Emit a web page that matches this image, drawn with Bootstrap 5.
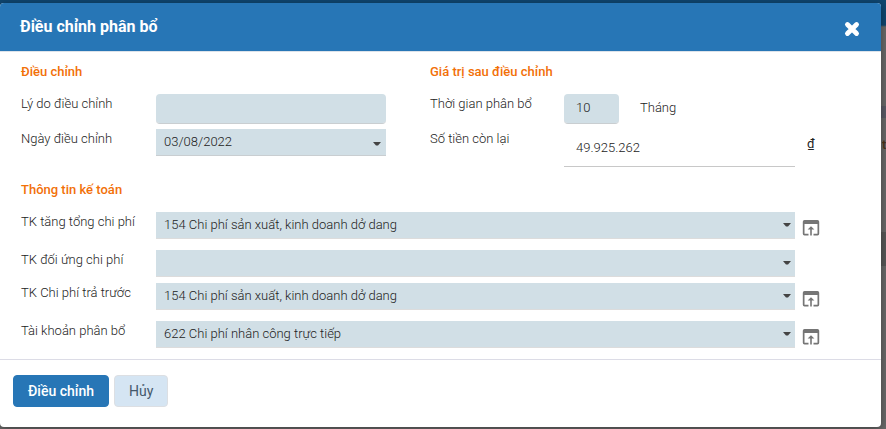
<!DOCTYPE html>
<html lang="vi">
<head>
<meta charset="utf-8">
<meta name="viewport" content="width=device-width, initial-scale=1">
<title>Điều chỉnh phân bổ</title>
<link href="https://cdn.jsdelivr.net/npm/bootstrap@5.3.0/dist/css/bootstrap.min.css" rel="stylesheet">
<style>
  body {
    font-family: Roboto, "Noto Sans", sans-serif;
    font-size: 13px;
    font-weight: 300;
    line-height: 18px;
    color: #222;
    background:
      linear-gradient(#5b5b66, #5b5b66) right 0 top 106px / 40px 12px no-repeat,
      linear-gradient(#585858, #585858) right 0 top 232px / 6px 34px no-repeat,
      linear-gradient(#0f4670 25px, #696969 27px);
    overflow: hidden;
  }
  .behind-text { top: 136px; right: 0; width: 4px; overflow: hidden; color: #4a3418; font-weight: 500; }
  .dialog { margin: 3px 5px 3px 0; background: #fff; border-radius: 4px; box-shadow: 0 2px 8px rgba(0, 0, 0, .4); position: relative; }
  .dialog-head { background: #2776b6; border-bottom: 1px solid #dde3ea; border-radius: 4px 4px 0 0; height: 49px; padding: 0 21px 1px 20px; }
  .dialog-head h1 { font-size: 16px; line-height: 24px; font-weight: 700; color: #fff; }
  .dialog-body { padding: 11px 60px 10px 21px; }
  .dialog-foot { border-top: 1px solid #dcdce6; padding: 15px 13px 20px; gap: 5px; }
  .section-title { font-size: 13px; line-height: 18px; font-weight: 500; color: #f27008; margin-bottom: 13px; }
  .two-cols { display: grid; grid-template-columns: 365fr 391fr; column-gap: 44px; margin-bottom: 14px; }
  .form-line { margin-bottom: 10px; }
  .form-line.tight { margin-bottom: 5px; }
  .form-line:last-child { margin-bottom: 0; }
  .account-lines .form-line { height: 28px; }
  .field-label { flex: 0 0 135px; padding-top: 1px; }
  .field-label.narrow { flex-basis: 134px; }
  .suffix { flex: 0 0 26px; padding: 6px 0 0 12px; font-weight: 400; }
  .suffix.open { padding: 6px 0 0 7px; }
  .suffix button { color: #757575; line-height: 0; }
  .field, .field:focus {
    min-width: 0; height: 28px; padding: 0 12px 0 8px; border: 0; border-bottom: 1px solid #c9ced1; border-radius: 0;
    background-color: #d1dfe6; color: #222; font-size: 13px; font-weight: 300; line-height: 18px;
  }
  select.field, select.field:focus {
    height: 27px; padding-right: 24px; border-bottom-color: #dcdcdc;
    background-image: url("data:image/svg+xml,%3Csvg xmlns='http://www.w3.org/2000/svg' viewBox='0 0 8 4'%3E%3Cpath d='M0 0h8L5 3.4H3z' fill='%23444'/%3E%3C/svg%3E");
    background-repeat: no-repeat; background-position: right 4px top 11px; background-size: 8px 4px;
  }
  select.field.date { border-bottom-color: #c9ced1; background-position: right 5px top 13px; }
  .field.rounded-box { height: 30px; border-radius: 4px; padding: 0 12px 2px; }
  .field.months { flex: 0 0 55px; }
  .field.amount { height: 38px; padding: 0 12px; background: #fff; border-bottom-color: #c8c8c8; }
  .unit { padding: 5px 0 0 21px; }
  .btn-dialog { height: 32px; padding: 0 14px; font-size: 14px; line-height: 20px; border-radius: 4px; }
  .btn-save, .btn-save:hover { background: #2776b6; border-color: #2776b6; color: #fff; font-weight: 500; }
  .btn-cancel, .btn-cancel:hover { background: #d5e5f3; border-color: #dcdfe3; color: #44586b; font-weight: 400; }
</style>
<script src="https://cdn.jsdelivr.net/npm/bootstrap@5.3.0/dist/js/bootstrap.bundle.min.js"></script>
</head>
<body>
<svg class="d-none" aria-hidden="true">
  <symbol id="open-icon" viewBox="0 0 18 16">
    <path fill="currentColor" fill-rule="evenodd" d="M2.5 0h13A1.7 1.7 0 0 1 17.200 1.700v12A1.700 1.700 0 0 1 15.500 15.400h-4v-1.600h4V4h-13v9.800h4v1.600h-4A1.700 1.700 0 0 1 .8 13.700v-12A1.700 1.700 0 0 1 2.500 0zM9 6.200l3.400 3.400H9.800v5.800H8.200V9.600H5.600z"/>
  </symbol>
</svg>
<div class="behind-text position-absolute" aria-hidden="true">t</div>

<form class="dialog" role="dialog" aria-labelledby="dialog-title">
  <header class="dialog-head d-flex align-items-center justify-content-between">
    <h1 id="dialog-title" class="mb-0">Điều chỉnh phân bổ</h1>
    <button type="button" class="btn p-0 border-0 lh-1 mt-1" aria-label="Đóng">
      <svg class="d-block" width="16" height="16" viewBox="0 0 14 14"><path d="M3 3l8 8M11 3l-8 8" stroke="#fff" stroke-width="4.200" stroke-linecap="round"/></svg>
    </button>
  </header>

  <div class="dialog-body">
    <div class="two-cols">
      <section>
        <h2 class="section-title">Điều chỉnh</h2>
        <div class="form-line tight d-flex align-items-start">
          <label class="field-label" for="reason">Lý do điều chỉnh</label>
          <input id="reason" class="form-control field rounded-box" type="text">
        </div>
        <div class="form-line d-flex align-items-start">
          <label class="field-label" for="date">Ngày điều chỉnh</label>
          <select id="date" class="form-select field date"><option>03/08/2022</option></select>
        </div>
      </section>
      <section>
        <h2 class="section-title">Giá trị sau điều chỉnh</h2>
        <div class="form-line tight d-flex align-items-start">
          <label class="field-label narrow" for="months">Thời gian phân bổ</label>
          <input id="months" class="form-control field rounded-box months" type="text" value="10">
          <span class="unit">Tháng</span>
        </div>
        <div class="form-line d-flex align-items-start">
          <label class="field-label narrow" for="amount">Số tiền còn lại</label>
          <input id="amount" class="form-control field amount" type="text" value="49.925.262">
          <span class="suffix">₫</span>
        </div>
      </section>
    </div>

    <section class="account-lines">
      <h2 class="section-title">Thông tin kế toán</h2>
      <div class="form-line d-flex align-items-start">
        <label class="field-label" for="acc1">TK tăng tổng chi phí</label>
        <select id="acc1" class="form-select field"><option>154 Chi phí sản xuất, kinh doanh dở dang</option></select>
        <span class="suffix open"><button type="button" class="btn p-0 border-0" aria-label="Mở"><svg width="18" height="16"><use href="#open-icon"/></svg></button></span>
      </div>
      <div class="form-line tight d-flex align-items-start">
        <label class="field-label" for="acc2">TK đối ứng chi phí</label>
        <select id="acc2" class="form-select field"><option></option></select>
        <span class="suffix"></span>
      </div>
      <div class="form-line d-flex align-items-start">
        <label class="field-label" for="acc3">TK Chi phí trả trước</label>
        <select id="acc3" class="form-select field"><option>154 Chi phí sản xuất, kinh doanh dở dang</option></select>
        <span class="suffix open"><button type="button" class="btn p-0 border-0" aria-label="Mở"><svg width="18" height="16"><use href="#open-icon"/></svg></button></span>
      </div>
      <div class="form-line d-flex align-items-start">
        <label class="field-label" for="acc4">Tài khoản phân bổ</label>
        <select id="acc4" class="form-select field"><option>622 Chi phí nhân công trực tiếp</option></select>
        <span class="suffix open"><button type="button" class="btn p-0 border-0" aria-label="Mở"><svg width="18" height="16"><use href="#open-icon"/></svg></button></span>
      </div>
    </section>
  </div>

  <footer class="dialog-foot d-flex">
    <button type="submit" class="btn btn-dialog btn-save">Điều chỉnh</button>
    <button type="button" class="btn btn-dialog btn-cancel">Hủy</button>
  </footer>
</form>
</body>
</html>
